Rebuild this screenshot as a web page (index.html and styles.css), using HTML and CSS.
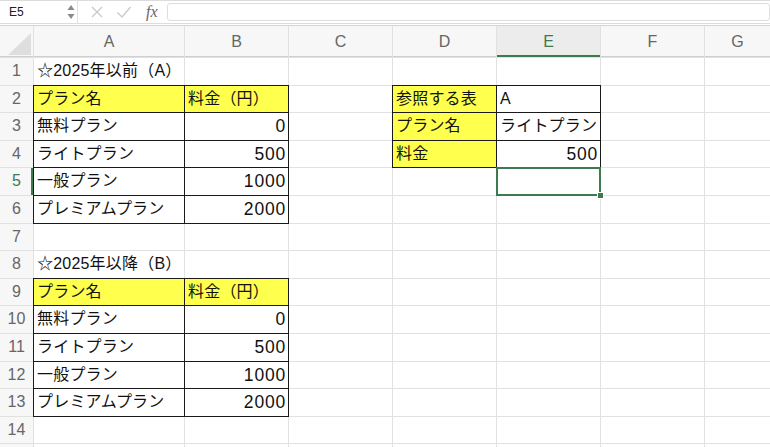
FILE: index.html
```html
<!DOCTYPE html>
<html lang="ja">
<head>
    <meta charset="UTF-8">
    <meta name="viewport" content="width=device-width, initial-scale=1.0">
    <title>料金表</title>
    <link rel="stylesheet" href="styles.css">
</head>
<body>
    <div class="formula-bar">
        <div class="name-box">
            <span>E5</span>
            <svg class="stepper" width="8" height="16" viewBox="0 0 8 16">
                <path d="M4 1 L7.5 6 L0.5 6 Z" fill="#8a8a8a"/>
                <path d="M4 15 L7.5 10 L0.5 10 Z" fill="#8a8a8a"/>
            </svg>
        </div>
        <div class="bar-icons">
            <svg width="14" height="14" viewBox="0 0 14 14">
                <path d="M2 2 L12 12 M12 2 L2 12" stroke="#c9c9c9" stroke-width="1.3" fill="none"/>
            </svg>
            <svg width="16" height="14" viewBox="0 0 16 14">
                <path d="M1.5 7.5 L6 12 L14.5 2" stroke="#c9c9c9" stroke-width="1.3" fill="none"/>
            </svg>
            <span class="fx">fx</span>
        </div>
        <div class="formula-input"></div>
    </div>
    <div class="bar-gap"></div>

    <div class="sheet">
        <!-- 列見出し -->
        <div class="corner">
            <svg width="33" height="31" viewBox="0 0 33 31">
                <path d="M31 7 L31 29 L8 29 Z" fill="#dedede"/>
            </svg>
        </div>
        <div class="ch">A</div>
        <div class="ch">B</div>
        <div class="ch">C</div>
        <div class="ch">D</div>
        <div class="ch active">E</div>
        <div class="ch">F</div>
        <div class="ch">G</div>

        <!-- 1 -->
        <div class="rh">1</div>
        <div class="c">☆2025年以前（A）</div>
        <div class="c"></div><div class="c"></div><div class="c"></div><div class="c"></div><div class="c"></div><div class="c"></div>

        <!-- 2 -->
        <div class="rh">2</div>
        <div class="c y b">プラン名</div>
        <div class="c y b">料金（円）</div>
        <div class="c"></div>
        <div class="c y b">参照する表</div>
        <div class="c b">A</div>
        <div class="c"></div><div class="c"></div>

        <!-- 3 -->
        <div class="rh">3</div>
        <div class="c b">無料プラン</div>
        <div class="c b r">0</div>
        <div class="c"></div>
        <div class="c y b">プラン名</div>
        <div class="c b">ライトプラン</div>
        <div class="c"></div><div class="c"></div>

        <!-- 4 -->
        <div class="rh">4</div>
        <div class="c b">ライトプラン</div>
        <div class="c b r">500</div>
        <div class="c"></div>
        <div class="c y b">料金</div>
        <div class="c b r">500</div>
        <div class="c"></div><div class="c"></div>

        <!-- 5 -->
        <div class="rh active">5</div>
        <div class="c b">一般プラン</div>
        <div class="c b r">1000</div>
        <div class="c"></div>
        <div class="c"></div>
        <div class="c selected"></div>
        <div class="c"></div><div class="c"></div>

        <!-- 6 -->
        <div class="rh">6</div>
        <div class="c b">プレミアムプラン</div>
        <div class="c b r">2000</div>
        <div class="c"></div><div class="c"></div><div class="c"></div><div class="c"></div><div class="c"></div>

        <!-- 7 -->
        <div class="rh">7</div>
        <div class="c"></div><div class="c"></div><div class="c"></div><div class="c"></div><div class="c"></div><div class="c"></div><div class="c"></div>

        <!-- 8 -->
        <div class="rh">8</div>
        <div class="c">☆2025年以降（B）</div>
        <div class="c"></div><div class="c"></div><div class="c"></div><div class="c"></div><div class="c"></div><div class="c"></div>

        <!-- 9 -->
        <div class="rh">9</div>
        <div class="c y b">プラン名</div>
        <div class="c y b">料金（円）</div>
        <div class="c"></div><div class="c"></div><div class="c"></div><div class="c"></div><div class="c"></div>

        <!-- 10 -->
        <div class="rh">10</div>
        <div class="c b">無料プラン</div>
        <div class="c b r">0</div>
        <div class="c"></div><div class="c"></div><div class="c"></div><div class="c"></div><div class="c"></div>

        <!-- 11 -->
        <div class="rh">11</div>
        <div class="c b">ライトプラン</div>
        <div class="c b r">500</div>
        <div class="c"></div><div class="c"></div><div class="c"></div><div class="c"></div><div class="c"></div>

        <!-- 12 -->
        <div class="rh">12</div>
        <div class="c b">一般プラン</div>
        <div class="c b r">1000</div>
        <div class="c"></div><div class="c"></div><div class="c"></div><div class="c"></div><div class="c"></div>

        <!-- 13 -->
        <div class="rh">13</div>
        <div class="c b">プレミアムプラン</div>
        <div class="c b r">2000</div>
        <div class="c"></div><div class="c"></div><div class="c"></div><div class="c"></div><div class="c"></div>

        <!-- 14 -->
        <div class="rh">14</div>
        <div class="c"></div><div class="c"></div><div class="c"></div><div class="c"></div><div class="c"></div><div class="c"></div><div class="c"></div>

        <!-- 15（画面下端で切れる行） -->
        <div class="rh"></div>
        <div class="c"></div><div class="c"></div><div class="c"></div><div class="c"></div><div class="c"></div><div class="c"></div><div class="c"></div>
    </div>
</body>
</html>
```

FILE: styles.css
```css
body {
    margin: 0;
    width: 770px;
    height: 447px;
    overflow: hidden;
    background-color: #fff;
    font-family: 'Liberation Sans', 'Noto Sans CJK JP', sans-serif;
}

/* 数式バー */
.formula-bar {
    display: flex;
    height: 22px;
    border-top: 1px solid #dcdcdc;
    border-bottom: 1px solid #dcdcdc;
}

.name-box {
    width: 78px;
    box-sizing: border-box;
    display: flex;
    align-items: center;
    justify-content: space-between;
    padding: 0 2px 0 9px;
    font-size: 12px;
    color: #222;
    border-right: 1px solid #e2e2e2;
}

.bar-icons {
    width: 88px;
    display: flex;
    align-items: center;
    gap: 12px;
    padding-left: 12px;
    box-sizing: border-box;
}

.fx {
    font-family: 'Liberation Serif', serif;
    font-style: italic;
    font-size: 16px;
    color: #666;
    margin-left: 2px;
}

.formula-input {
    flex: 1;
    margin: 2px 0 2px 1px;
    border: 1px solid #dedede;
    border-radius: 3px;
    background-color: #fff;
}

.bar-gap {
    height: 1px;
    border-bottom: 1px solid #d4d4d4;
}

/* シート */
.sheet {
    display: grid;
    grid-template-columns: 33px 150px 103px 103px 103px 103px 103px 1fr;
    grid-template-rows: 31px;
    grid-auto-rows: 26.6px;
    gap: 1px;
    background-color: #e1e1e1;
}

.corner {
    background-color: #f7f7f7;
    box-shadow: inset 0 -1px 0 #cfcfcf;
}

.corner svg {
    display: block;
}

.ch {
    background-color: #f7f7f7;
    color: #666;
    font-size: 16px;
    line-height: 31px;
    text-align: center;
    box-shadow: inset 0 -1px 0 #cfcfcf;
}

.ch.active {
    background-color: #ececec;
    color: #3d7a4e;
    box-shadow: inset 0 -2px 0 #3d7a4e;
}

.rh {
    background-color: #f7f7f7;
    color: #666;
    font-size: 16px;
    line-height: 26.6px;
    text-align: center;
}

.rh.active {
    color: #3d7a4e;
    box-shadow: inset -2px 0 0 #3d7a4e;
}

.c {
    background-color: #fff;
    color: #111;
    font-size: 16px;
    letter-spacing: 0.2px;
    line-height: 26.6px;
    padding: 0 3px;
    white-space: nowrap;
}

.c.y {
    background-color: #ffff4d;
}

.c.b {
    outline: 1px solid #1a1a1a;
}

.c.r {
    text-align: right;
    font-size: 17.5px;
    letter-spacing: 0.8px;
    padding-right: 2px;
}

.c.selected {
    position: relative;
    outline: 2px solid #3d7a4e;
    outline-offset: -1px;
}

.c.selected::after {
    content: '';
    position: absolute;
    right: -4px;
    bottom: -4px;
    width: 5px;
    height: 5px;
    background-color: #3d7a4e;
    border: 1px solid #fff;
}
```
